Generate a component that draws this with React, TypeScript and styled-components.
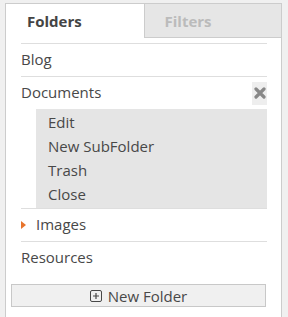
import React from "react";
import styled, { createGlobalStyle } from "styled-components";

const Global = createGlobalStyle`
  html, body { margin: 0; padding: 0; background: #f0f0f0; overflow: hidden; }
  body { font-family: "Open Sans", "Liberation Sans", sans-serif; color: #484848; }
  * { box-sizing: border-box; }
`;

const Panel = styled.div`
  margin: 3px 6px 0 5px;
  width: 277px;
  height: 314px;
  background: #fff;
  border: 1px solid #cccccc;
  border-bottom: none;
`;

const Tabs = styled.div`
  display: flex;
  height: 34px;
`;

const Tab = styled.div<{ $active?: boolean }>`
  flex: 1;
  display: flex;
  align-items: center;
  padding-left: ${(p) => (p.$active ? "21px" : "20px")};
  font-weight: 700;
  font-size: 15px;
  color: ${(p) => (p.$active ? "#444" : "#bbb")};
  background: ${(p) => (p.$active ? "#fff" : "#e6e6e6")};
  border-left: ${(p) => (p.$active ? "none" : "1px solid #cccccc")};
  border-bottom: ${(p) => (p.$active ? "none" : "1px solid #cccccc")};
`;

const List = styled.ul`
  list-style: none;
  margin: 5px 14px 0 15px;
  padding: 0;
`;

const Item = styled.li`
  border-top: 1px solid #dedede;
`;

const RowLine = styled.div`
  height: 32px;
  display: flex;
  align-items: center;
  font-size: 15px;
  color: #484848;
`;

const RowText = styled.span`
  flex: 1;
  line-height: 20px;
  padding-bottom: 2px;
`;

const Caret = styled.span`
  width: 0;
  height: 0;
  border-top: 4.5px solid transparent;
  border-bottom: 4.5px solid transparent;
  border-left: 5px solid #e8742c;
  margin-right: 10px;
`;

const CloseBox = styled.span`
  width: 15px;
  height: 23px;
  background: #eeeeee;
  display: flex;
  align-items: center;
  justify-content: center;
`;

const Menu = styled.ul`
  list-style: none;
  margin: 0 0 0 15px;
  padding: 2px 0 1px 12px;
  background: #e5e5e5;
`;

const MenuItem = styled.li`
  height: 24px;
  line-height: 22px;
  font-size: 15px;
  color: #484848;
`;

const NewButton = styled.button`
  display: flex;
  align-items: center;
  justify-content: center;
  gap: 6px;
  margin: 10px 15px 0 5px;
  width: 255px;
  height: 23px;
  padding: 0;
  background: #f0f0f0;
  border: 1px solid #c8c8c8;
  font-family: "Open Sans", "Liberation Sans", sans-serif;
  font-size: 15px;
  color: #484848;
`;

const XIcon = () => (
  <svg width="12" height="12" viewBox="0 0 12 12">
    <path d="M2 2 L10 10 M10 2 L2 10" stroke="#888" strokeWidth="3.2" strokeLinecap="round" />
  </svg>
);

const PlusSquare = () => (
  <svg width="12" height="12" viewBox="0 0 12 12">
    <rect x="0.5" y="0.5" width="11" height="11" rx="1.5" fill="none" stroke="#484848" strokeWidth="1" />
    <path d="M6 3 V9 M3 6 H9" stroke="#484848" strokeWidth="1.2" />
  </svg>
);

export default function App() {
  return (
    <>
      <Global />
      <Panel>
        <Tabs>
          <Tab $active>Folders</Tab>
          <Tab>Filters</Tab>
        </Tabs>
        <List>
          <Item>
            <RowLine><RowText>Blog</RowText></RowLine>
          </Item>
          <Item>
            <RowLine>
              <RowText>Documents</RowText>
              <CloseBox><XIcon /></CloseBox>
            </RowLine>
            <Menu>
              <MenuItem>Edit</MenuItem>
              <MenuItem>New SubFolder</MenuItem>
              <MenuItem>Trash</MenuItem>
              <MenuItem>Close</MenuItem>
            </Menu>
          </Item>
          <Item>
            <RowLine><Caret /><RowText>Images</RowText></RowLine>
          </Item>
          <Item>
            <RowLine><RowText>Resources</RowText></RowLine>
          </Item>
        </List>
        <NewButton><PlusSquare />New Folder</NewButton>
      </Panel>
    </>
  );
}
